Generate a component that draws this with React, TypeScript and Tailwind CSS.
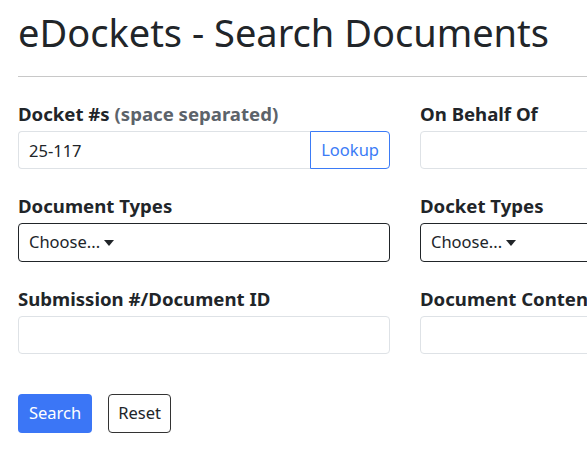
import React from "react";

const font = { fontFamily: '"Noto Sans", "Open Sans", sans-serif' };

const Label: React.FC<{ children: React.ReactNode }> = ({ children }) => (
  <label className="mb-1 block text-[18.6px] leading-[27px] font-bold whitespace-nowrap text-[#212529]">
    {children}
  </label>
);

const TextInput: React.FC<{ value?: string }> = ({ value }) => (
  <input
    readOnly
    value={value ?? ""}
    className="block h-[38px] w-full rounded-[4px] border border-[#dee2e6] bg-white px-[10px] text-[16.5px] text-[#212529] outline-none"
  />
);

const Choose: React.FC = () => (
  <div className="flex h-[39px] w-full items-center rounded-[4px] border border-[#212529] bg-white px-[10px] text-[16.5px] text-[#212529]">
    <span>Choose...</span>
    <svg width="10" height="6" viewBox="0 0 10 6" className="ml-[4px]">
      <path d="M0 0h10L5 6z" fill="#212529" />
    </svg>
  </div>
);

export default function App() {
  return (
    <div className="h-screen w-full overflow-hidden bg-white" style={font}>
      <div className="w-[792px] px-[18px]">
        {/* Header */}
        <h1 className="pt-[9px] text-[38px] leading-[47px] font-normal text-[#212529]">
          eDockets - Search Documents
        </h1>
        <hr className="mt-[20px] mb-[23px] border-t border-[#c8c8c8]" />

        {/* Form */}
        <div className="grid grid-cols-[372px_372px] gap-x-[30px]">
          <div className="mb-[23px]">
            <Label>
              Docket #s <span className="text-[#5c636a]">(space separated)</span>
            </Label>
            <div className="flex h-[38px]">
              <input
                readOnly
                value="25-117"
                className="block h-full min-w-0 flex-1 rounded-l-[4px] border border-r-0 border-[#dee2e6] px-[10px] text-[16.5px] text-[#212529] outline-none"
              />
              <button className="h-full rounded-r-[4px] border border-[#3b7bf6] px-[10px] text-[16.5px] text-[#3b7bf6]">
                Lookup
              </button>
            </div>
          </div>
          <div className="mb-[23px]">
            <Label>On Behalf Of</Label>
            <TextInput />
          </div>

          <div className="mb-[23px]">
            <Label>Document Types</Label>
            <Choose />
          </div>
          <div className="mb-[23px]">
            <Label>Docket Types</Label>
            <Choose />
          </div>

          <div>
            <Label>Submission #/Document ID</Label>
            <TextInput />
          </div>
          <div>
            <Label>Document Content</Label>
            <TextInput />
          </div>
        </div>

        {/* Actions */}
        <div className="mt-[40px] flex gap-[16px]">
          <button className="h-[39px] rounded-[4px] bg-[#3b76f6] px-[11px] text-[16.5px] text-white">
            Search
          </button>
          <button className="h-[39px] rounded-[4px] border border-[#333] bg-white px-[9px] text-[16.5px] text-[#212529]">
            Reset
          </button>
        </div>
      </div>
    </div>
  );
}
